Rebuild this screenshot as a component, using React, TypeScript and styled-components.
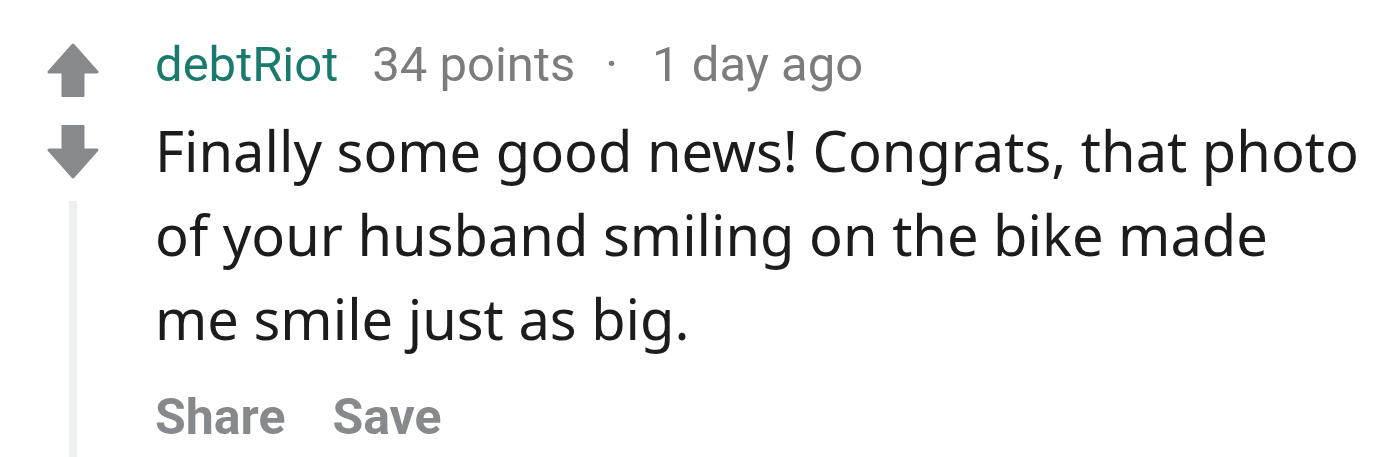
import React from 'react'
import styled, { createGlobalStyle } from 'styled-components'

const GlobalStyle = createGlobalStyle`
  html, body {
    margin: 0;
    padding: 0;
    background: #ffffff;
  }
`

const Comment = styled.div`
  display: flex;
  width: 1381px;
  height: 457px;
  overflow: hidden;
  box-sizing: border-box;
  padding: 43px 0 0 47px;
`

const VoteColumn = styled.div`
  display: flex;
  flex-direction: column;
  align-items: center;
  width: 52px;
  flex-shrink: 0;
`

const VoteButton = styled.button`
  display: flex;
  padding: 0;
  border: 0;
  background: none;
  margin-bottom: ${(p: { gap?: number }) => p.gap ?? 0}px;
`

const ThreadLine = styled.div`
  width: 8px;
  flex: 1;
  margin-top: 22px;
  background: #edeff1;
`

const Body = styled.div`
  display: flex;
  flex-direction: column;
  margin-left: 56px;
`

const Meta = styled.div`
  display: flex;
  align-items: baseline;
  font-family: Roboto, 'Liberation Sans', sans-serif;
  font-size: 49px;
  line-height: 52px;
  color: #7c7c7c;
  margin-top: -4px;
`

const Author = styled.span`
  color: #1a7a6e;
  margin-right: 34px;
`

const Dot = styled.span`
  margin: 0 34px 0 30px;
`

const Text = styled.p`
  margin: 17px 0 0 0;
  font-family: 'Noto Sans', 'Open Sans', sans-serif;
  font-size: 56px;
  line-height: 84px;
  color: #1c1c1c;
  width: 1206px;
`

const Actions = styled.div`
  display: flex;
  gap: 47px;
  margin-top: 27px;
`

const Action = styled.span`
  font-family: Roboto, 'Liberation Sans', sans-serif;
  font-weight: 700;
  font-size: 50px;
  line-height: 60px;
  color: #878a8c;
`

const Arrow = ({ down }: { down?: boolean }) => (
  <svg
    width="52"
    height="54"
    viewBox="0 0 52 54"
    style={down ? { transform: 'rotate(180deg)' } : undefined}
  >
    <path
      d="M26 2 L50 29 L36 29 L36 53 L16 53 L16 29 L2 29 Z"
      fill="#878a8c"
      stroke="#878a8c"
      strokeWidth="3"
      strokeLinejoin="round"
    />
  </svg>
)

const App = () => (
  <>
    <GlobalStyle />
    <Comment>
      <VoteColumn>
        <VoteButton gap={28} aria-label="upvote">
          <Arrow />
        </VoteButton>
        <VoteButton aria-label="downvote">
          <Arrow down />
        </VoteButton>
        <ThreadLine />
      </VoteColumn>
      <Body>
        <Meta>
          <Author>debtRiot</Author>
          <span>34 points</span>
          <Dot>·</Dot>
          <span>1 day ago</span>
        </Meta>
        <Text>
          Finally some good news! Congrats, that photo of your husband smiling on the bike made me smile just as big.
        </Text>
        <Actions>
          <Action>Share</Action>
          <Action>Save</Action>
        </Actions>
      </Body>
    </Comment>
  </>
)

export default App
